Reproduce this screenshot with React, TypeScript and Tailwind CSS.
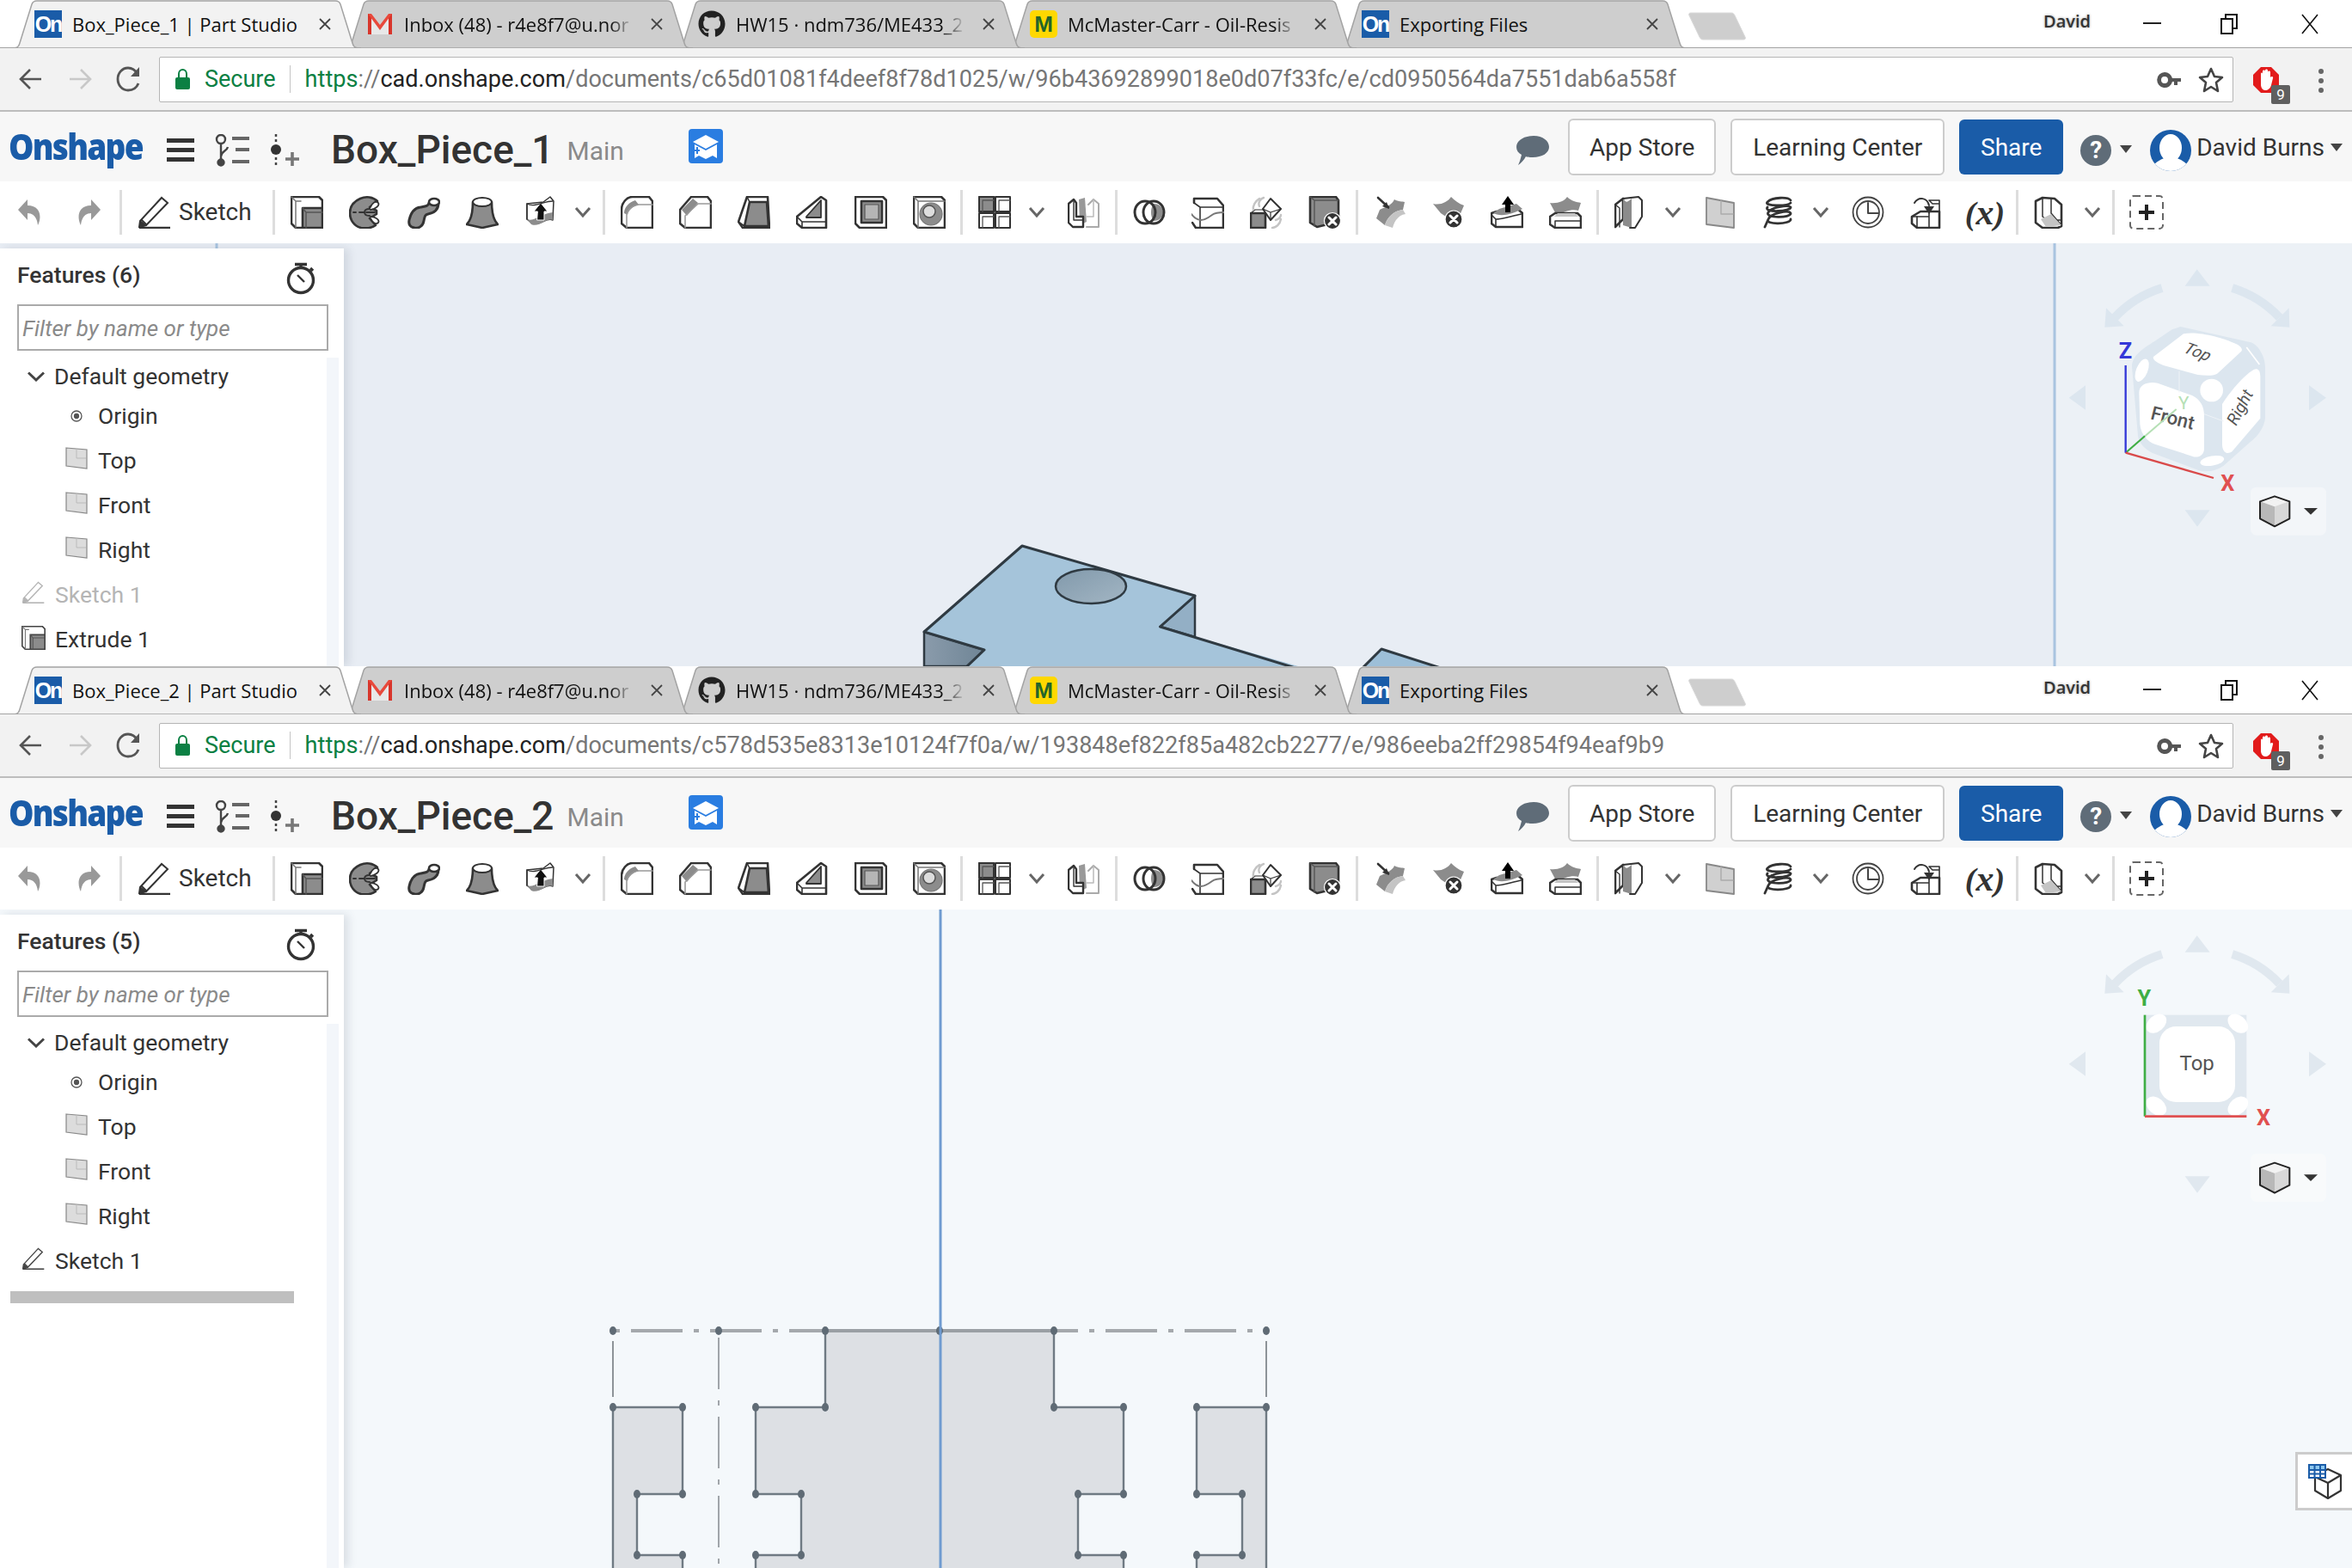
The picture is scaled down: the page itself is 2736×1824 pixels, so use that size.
import React from "react";
import { FaGithub } from "react-icons/fa";

const D = "#333";
const G = "#8c8c8c";
const L = "#c4c4c4";

function I({ children }: { children: React.ReactNode }) {
  return (
    <svg width="38" height="38" viewBox="0 0 38 38" fill="none" stroke={D} strokeWidth="2.6" strokeLinejoin="round" strokeLinecap="round">
      {children}
    </svg>
  );
}

const icons: Record<string, React.ReactNode> = {
  extrude: (<>
    <path d="M1 1H33L37 5V37H6L1 32Z" fill="#fff" />
    <path d="M1 1L6 6V37M6 6H12" stroke="#777" strokeWidth="1.5" />
    <path d="M14 14H37V37H14Z" fill={G} />
    <path d="M14 14L18 19H37M18 19V37" stroke="#555" strokeWidth="1.5" />
  </>),
  revolve: (<>
    <path d="M33 6C28 1 20 0 13 3C4 7 1 14 1 20C1 28 6 35 14 37C21 38 27 37 31 34L24 26L32 21V17L24 13Z" fill={G} />
    <path d="M25 13C27 8 31 5 34 8C36 11 31 15 25 16M25 24C31 24 36 28 34 31C31 34 27 30 25 26" fill="#fff" strokeWidth="1.8" />
    <path d="M5 19H8M12 19H18M18 19C18 16 20 15 24 15M18 19C18 22 20 23 24 23M20 19H30" strokeWidth="1.8" />
  </>),
  sweep: (<>
    <path d="M36 8C36 17 30 20 24 21C20 22 20 24 19 29C18 35 13 38 8 37C3 36 1 33 2 28C4 19 8 14 15 13C21 12 24 12 25 8Z" fill={G} strokeWidth="3" />
    <ellipse cx="31" cy="7" rx="6" ry="4" fill="#fff" strokeWidth="2.6" />
  </>),
  loft: (<>
    <path d="M8 7C8 18 6 28 1 33L19 37L37 33C32 28 30 18 30 7Z" fill={G} />
    <ellipse cx="19" cy="7" rx="11" ry="5" fill="#fff" strokeWidth="2" />
  </>),
  thicken: (<>
    <path d="M3 9L22 7L30 1L34 6L33 28C25 24 18 36 8 31L3 27Z" fill="#fff" strokeWidth="1.5" />
    <path d="M3 27C12 30 15 22 33 19V28C25 25 18 37 8 33Z" fill={G} stroke="none" />
    <path d="M15 28H23V18H27L19 8L11 18H15Z" fill="#111" stroke="#fff" strokeWidth="1" />
    <path d="M3 9V27M3 9C12 14 22 6 33 6" strokeWidth="1.4" />
  </>),
  fillet: (<>
    <path d="M14 1H33L37 6V37H7L1 32V16C1 8 7 1 14 1Z" fill="#fff" />
    <path d="M4 20C4 13 10 7 17 5L21 10C15 12 9 16 8 22Z" fill={G} stroke="none" />
    <path d="M7 37V22C8 15 14 11 21 10H37" stroke="#999" strokeWidth="1.6" />
  </>),
  chamfer: (<>
    <path d="M14 1H33L37 6V37H7L1 32V16Z" fill="#fff" />
    <path d="M3 16L16 3L22 8L9 23Z" fill={G} stroke="none" />
    <path d="M7 37V23L22 9H37" stroke="#999" strokeWidth="1.6" />
  </>),
  draft: (<>
    <path d="M11 1H35L37 37H6L1 30Z" fill="#fff" />
    <path d="M14 7H34L36 35H8Z" fill={G} />
    <path d="M11 1L14 7M1 30L8 35" strokeWidth="1.6" />
  </>),
  rib: (<>
    <path d="M29 1L35 5V37H7L1 32V24Z" fill="#fff" />
    <path d="M12 24L29 5V25H12Z" fill={G} stroke="#333" strokeWidth="1.8" />
    <path d="M1 24L7 30H35M7 30V37" strokeWidth="1.6" />
  </>),
  shell: (<>
    <path d="M1 1H33L37 5V37H6L1 32Z" fill="#fff" />
    <path d="M8 6H32V31H8Z" fill={G} />
    <path d="M12 10H28V27H12Z" fill="#b5b5b5" stroke="#555" strokeWidth="1.2" />
  </>),
  hole: (<>
    <path d="M1 1H33L37 5V37H6L1 32Z" fill="#fff" />
    <path d="M1 1L6 6H37M6 6V37" strokeWidth="1.5" stroke="#777" />
    <circle cx="21" cy="21" r="13" fill={G} stroke="#777" strokeWidth="1.2" />
    <circle cx="19" cy="18" r="7" fill="#ddd" stroke="#555" strokeWidth="1.5" />
  </>),
  pattern: (<>
    <path d="M1 1H18V18H1ZM20 1H37V18H20ZM1 20H18V37H1ZM20 20H37V37H20Z" fill="#fff" strokeWidth="2" />
    <path d="M1 1H18V18H1Z" fill={G} strokeWidth="2" />
    <path d="M5 5H18M5 5V18M5 24H18M5 24V37M24 5H37M24 5V18M24 24H37M24 24V37" strokeWidth="1.3" stroke="#555" />
  </>),
  mirror: (<>
    <path d="M13 4L20 2L22 30L14 34Z" fill="#999" stroke="none" />
    <path d="M24 10L30 4L36 9V36H22" fill="#fff" stroke="#aaa" strokeWidth="2" />
    <path d="M30 4V24H22" stroke="#bbb" strokeWidth="1.5" />
    <path d="M1 9L7 4L10 8V24H18V36H6L1 31Z" fill="#fff" strokeWidth="2.4" />
    <path d="M7 4V28H18" strokeWidth="1.4" />
  </>),
  boolean: (<>
    <path d="M24 9C20 14 20 24 24 29C31 29 35 24 35 19C35 14 31 9 24 9Z" fill={G} stroke="none" />
    <ellipse cx="14" cy="19" rx="12" ry="13" strokeWidth="3" />
    <ellipse cx="24" cy="19" rx="12" ry="13" strokeWidth="3" />
  </>),
  split: (<>
    <path d="M3 8V3H30L37 11V37H5L1 31" fill="#fff" />
    <path d="M3 8L10 13H37M10 13V37" strokeWidth="1.6" />
    <path d="M0 21C8 32 16 28 24 22C28 19 33 19 38 19" stroke="#777" strokeWidth="2" />
  </>),
  transform: (<>
    <path d="M1 20H18V37H1Z" fill={G} />
    <path d="M1 20L6 16H20L18 20M18 20V37" strokeWidth="1.2" />
    <path d="M24 3L36 15L24 28L15 15Z" fill="#fff" strokeWidth="2" />
    <path d="M15 15L24 19L36 15M24 19V28" strokeWidth="1.2" />
    <path d="M11 12C9 8 12 3 16 2M4 16C3 12 6 6 11 3" stroke={L} strokeWidth="2.4" />
    <path d="M30 28C34 27 36 24 36 22M26 37C30 37 35 33 36 27" stroke={L} strokeWidth="2.4" />
  </>),
  del: (<>
    <path d="M2 1H32L35 5V30L10 36L2 31Z" fill={G} />
    <path d="M2 1L7 5H35M7 5V35" stroke="#555" strokeWidth="1.4" />
    <circle cx="28" cy="29" r="9.5" fill={D} stroke="#fff" strokeWidth="1.2" />
    <path d="M24 25L32 33M32 25L24 33" stroke="#fff" strokeWidth="3" />
  </>),
  moveFace: (<>
    <path d="M7 16C13 13 22 10 24 4C29 7 33 6 36 7L34 16C24 17 16 24 13 34L3 26Z" fill={G} stroke="none" />
    <path d="M13 34C16 24 24 17 34 16L37 21C29 22 24 29 22 37Z" fill={L} stroke="none" />
    <path d="M5 2L17 13" strokeWidth="2.6" />
    <path d="M18 15L15 7L10 12Z" fill={D} stroke="none" />
  </>),
  delSurf: (<>
    <path d="M1 9C10 11 18 7 22 1C26 5 31 9 37 11L28 32L10 20Z" fill={G} stroke="none" />
    <circle cx="25" cy="27" r="10" fill={D} stroke="#fff" strokeWidth="1.2" />
    <path d="M21 23L29 31M29 23L21 31" stroke="#fff" strokeWidth="3" />
  </>),
  offset: (<>
    <path d="M1 20L7 18C14 18 22 16 28 12L37 20V36H6L1 32Z" fill="#fff" />
    <path d="M3 20C9 23 20 24 37 15L30 9L10 15Z" fill={G} stroke="none" />
    <path d="M6 27V36M6 27L1 22M6 27C16 27 24 23 36 21" strokeWidth="1.6" />
    <path d="M17 19H23V10H27L20 0L13 10H17Z" fill="#000" stroke="none" />
  </>),
  replace: (<>
    <path d="M1 8C10 9 18 6 21 1C26 6 32 7 37 8L34 17C26 15 18 18 9 23Z" fill={G} stroke="none" />
    <path d="M1 24L7 20H33L37 24V37H7L1 33Z" fill="#fff" />
    <path d="M6 24H34L30 20H10Z" fill={L} stroke="none" />
    <path d="M7 29V37M7 29H37" strokeWidth="1.5" />
  </>),
  sheet: (<>
    <path d="M1 10L10 3V27L1 36Z" fill="#fff" />
    <path d="M10 3C14 8 14 8 20 3V37L10 34Z" fill={G} stroke="none" />
    <path d="M10 3L28 1L32 5V24L24 37H18" fill="none" strokeWidth="2" />
    <path d="M1 10L6 14V36" strokeWidth="1.4" />
  </>),
  plane: (<>
    <path d="M3 2L35 8V37L3 33Z" fill="#d0d0d0" stroke="#888" strokeWidth="1.8" />
    <path d="M20 5V21H34" stroke="#aaa" strokeWidth="1.4" />
  </>),
  helix: (<>
    <path d="M33 5C30 1 12 1 6 7C1 12 30 12 33 8M6 13C1 20 34 18 33 13C30 10 10 13 7 19C2 26 34 26 33 20C30 16 10 20 7 27C2 34 34 33 33 27M7 27L3 36" strokeWidth="2.8" fill="none" />
  </>),
  clock: (<>
    <circle cx="19" cy="19" r="17.5" strokeWidth="1.8" stroke="#444" />
    <circle cx="19" cy="19" r="13" strokeWidth="1.8" stroke="#444" />
    <path d="M19 8V20H31" strokeWidth="2" stroke="#444" />
  </>),
  insert: (<>
    <path d="M2 24L12 18H34V37H8L2 32Z" fill="#fff" />
    <path d="M22 5L34 5V27M22 5L26 9H34M8 24H22M22 18V37M8 24V37" strokeWidth="1.6" />
    <path d="M2 24L8 24" strokeWidth="1.6" />
    <path d="M5 8C10 0 20 2 22 11" strokeWidth="2" />
    <path d="M16 12H28L22 21Z" fill={D} stroke="none" />
  </>),
  smetal: (<>
    <path d="M2 6L10 2L24 3L32 10V35L28 37H10L2 31Z" fill="#fff" />
    <path d="M10 2V24L16 28H32M20 3V20L32 34" strokeWidth="1.5" />
    <path d="M8 27L20 21L32 34L14 36Z" fill={L} stroke="none" />
  </>),
};

function Ic({ n }: { n: string }) {
  return (
    <div className="w-[68px] h-[40px] flex items-center justify-center shrink-0">
      <I>{icons[n]}</I>
    </div>
  );
}
function Chev() {
  return (
    <div className="w-[36px] pr-[6px] flex items-center justify-center shrink-0">
      <svg width="20" height="14" viewBox="0 0 20 14" fill="none" stroke="#666" strokeWidth="3">
        <path d="M2 2L10 11L18 2" />
      </svg>
    </div>
  );
}
function Sep() {
  return <div className="w-[3px] h-[52px] bg-[#dddddd] ml-[2px] mr-[3px] shrink-0" />;
}
function Pencil({ c = "#333", s = 38 }: { c?: string; s?: number }) {
  return (
    <svg width={s} height={s} viewBox="0 0 38 38" fill="none" stroke={c} strokeWidth="2">
      <path d="M2 29L27 2L34 8L9 34L1 36ZM4 28L10 34" fill="#fff" />
      <path d="M1 37H37" strokeWidth="2.6" />
      <path d="M3 30L2 36L8 34Z" fill={c} />
    </svg>
  );
}
function Undo({ flip }: { flip?: boolean }) {
  return (
    <div className="w-[68px] flex justify-center shrink-0">
      <svg width="30" height="32" viewBox="0 0 30 32" fill="#999" className={flip ? "-scale-x-100" : ""}>
        <path d="M12 1L1 13L12 25V17C19 17 23 22 24 31C28 24 29 8 12 8Z" />
      </svg>
    </div>
  );
}

function Toolbar() {
  return (
    <div className="h-[72px] bg-white flex items-center pl-[1px] shrink-0">
      <Undo />
      <Undo flip />
      <Sep />
      <div className="w-[170px] pl-[16px] flex items-center gap-[9px] shrink-0">
        <Pencil />
        <span className="text-[28px] text-[#333] font-['Roboto',sans-serif]">Sketch</span>
      </div>
      <Sep />
      <Ic n="extrude" /><Ic n="revolve" /><Ic n="sweep" /><Ic n="loft" /><Ic n="thicken" /><Chev />
      <Sep />
      <Ic n="fillet" /><Ic n="chamfer" /><Ic n="draft" /><Ic n="rib" /><Ic n="shell" /><Ic n="hole" />
      <Sep />
      <Ic n="pattern" /><Chev /><Ic n="mirror" />
      <Sep />
      <Ic n="boolean" /><Ic n="split" /><Ic n="transform" /><Ic n="del" />
      <Sep />
      <Ic n="moveFace" /><Ic n="delSurf" /><Ic n="offset" /><Ic n="replace" />
      <Sep />
      <Ic n="sheet" /><Chev /><Ic n="plane" /><Ic n="helix" /><Chev /><Ic n="clock" /><Ic n="insert" />
      <div className="w-[68px] flex justify-center shrink-0">
        <span className="text-[38px] leading-none font-bold italic text-[#333] font-['Liberation_Serif',serif]">(<span className="text-[42px]">x</span>)</span>
      </div>
      <Sep />
      <Ic n="smetal" /><Chev />
      <Sep />
      <div className="w-[68px] flex justify-center shrink-0">
        <svg width="40" height="40" viewBox="0 0 40 40" fill="none" stroke="#666" strokeWidth="2" strokeDasharray="8 5">
          <rect x="1" y="1" width="38" height="38" rx="4" />
          <path d="M20 11V29M11 20H29" stroke="#222" strokeWidth="4" strokeDasharray="none" />
        </svg>
      </div>
    </div>
  );
}

function OnFav() {
  return (
    <div className="w-[32px] h-[32px] bg-[#1a5ca8] text-white font-bold text-[25px] leading-[32px] tracking-[-2px] text-center overflow-hidden font-['Liberation_Sans',sans-serif] shrink-0">
      On
    </div>
  );
}
function GmailFav() {
  return (
    <svg width="30" height="26" viewBox="0 0 30 26" className="shrink-0 mx-[1px]">
      <path d="M5 6V25H25V6L15 20Z" fill="#e8e8e8" />
      <path d="M1 1H5V25H1ZM25 1H29V25H25Z" fill="#d8342a" />
      <path d="M1 1H5L15 14L25 1H29L15 20Z" fill="#e8493c" />
    </svg>
  );
}
function McFav() {
  return (
    <div className="w-[32px] h-[32px] rounded-[5px] bg-[#ffd800] text-[#24652a] font-bold text-[26px] leading-[32px] text-center font-['Liberation_Sans',sans-serif] shrink-0">
      M
    </div>
  );
}

function Tab({ active, fav, title, z, fade }: { active?: boolean; fav: React.ReactNode; title: string; z: string; fade?: boolean }) {
  return (
    <div className={`relative w-[407px] h-[56px] shrink-0 -mr-[21px] ${z}`}>
      <svg className="absolute inset-0" width="407" height="56" viewBox="0 0 407 56">
        <path d="M0 56C8 56 9 54 10 50L24 5C25 2 27 1 30 1H377C380 1 382 2 383 5L397 50C398 54 399 56 407 56Z" fill={active ? "#f2f2f2" : "#cecece"} stroke="#a3a3a3" strokeWidth="1.5" />
      </svg>
      <div className="relative h-full pl-[27px] flex items-center font-['Open_Sans',sans-serif] text-[#111]">
        <div className="w-[32px] flex justify-center items-center shrink-0">{fav}</div>
        <div className={`ml-[12px] w-[267px] text-[22px] whitespace-nowrap overflow-hidden ${fade ? "[mask-image:linear-gradient(to_right,black_90%,transparent)]" : ""}`}>
          {title}
        </div>
        <svg className="ml-[20px]" width="14" height="14" viewBox="0 0 14 14" stroke="#444" strokeWidth="1.8">
          <path d="M1 1L13 13M13 1L1 13" />
        </svg>
      </div>
    </div>
  );
}

function TabStrip({ first }: { first: string }) {
  return (
    <div className="h-[56px] bg-white relative flex pl-[13px] shrink-0 after:content-[''] after:absolute after:left-0 after:right-0 after:bottom-0 after:h-[1.5px] after:bg-[#a3a3a3]">
      <Tab active z="z-50" fav={<OnFav />} title={first} />
      <Tab z="z-40" fav={<GmailFav />} title="Inbox (48) - r4e8f7@u.nor" fade />
      <Tab z="z-30" fav={<FaGithub size={32} color="#222" />} title="HW15 · ndm736/ME433_2" fade />
      <Tab z="z-20" fav={<McFav />} title="McMaster-Carr - Oil-Resis" fade />
      <Tab z="z-10" fav={<OnFav />} title="Exporting Files" />
      <div className="ml-[21px] mt-[14px] relative z-10">
        <svg width="68" height="34" viewBox="0 0 68 34">
          <path d="M3 1H50C52 1 53 2 54 4L66 29C67 31 66 32 64 32H17C15 32 14 31 13 29L1 4C0 2 1 1 3 1Z" fill="#cecece" stroke="#d8d8d8" />
        </svg>
      </div>
      <div className="absolute left-[2377px] top-[10px] text-[20px] font-semibold text-[#333] font-['Open_Sans',sans-serif] [text-shadow:0_0_3px_#999]">David</div>
      <div className="absolute left-[2493px] top-[26px] w-[21px] h-[2px] bg-[#222]" />
      <svg className="absolute left-[2583px] top-[16px]" width="20" height="24" viewBox="0 0 20 24" fill="none" stroke="#111" strokeWidth="2">
        <path d="M6 5V1H19V17H14M1 6H14V23H1Z" />
      </svg>
      <svg className="absolute left-[2677px] top-[16px]" width="20" height="24" viewBox="0 0 20 24" fill="none" stroke="#111" strokeWidth="1.6">
        <path d="M1 1L19 23M19 1L1 23" />
      </svg>
    </div>
  );
}

function AddressBar({ path }: { path: string }) {
  return (
    <div className="h-[74px] bg-[#f2f2f2] border-b-[2px] border-[#bdbdbd] flex items-center shrink-0 relative">
      <svg className="ml-[22px]" width="28" height="28" viewBox="0 0 28 28" fill="none" stroke="#555" strokeWidth="2.6">
        <path d="M26 14H3M13 3L2 14L13 25" />
      </svg>
      <svg className="ml-[29px]" width="28" height="28" viewBox="0 0 28 28" fill="none" stroke="#c8c8c8" strokeWidth="2.6">
        <path d="M2 14H25M15 3L26 14L15 25" />
      </svg>
      <svg className="ml-[28px]" width="30" height="30" viewBox="0 0 30 30" fill="none" stroke="#555" strokeWidth="2.8">
        <path d="M25 9C22 4 18 2 14 2C7 2 2 8 2 15C2 22 7 28 14 28C20 28 24 25 26 20" />
        <path d="M27 1V12H17Z" fill="#555" stroke="none" />
      </svg>
      <div className="ml-[20px] w-[2413px] h-[53px] bg-white border border-[#b5b5b5] rounded-[2px] flex items-center relative">
        <svg className="ml-[18px]" width="17" height="24" viewBox="0 0 17 24">
          <path d="M4 10V6C4 3 6 1 8.5 1C11 1 13 3 13 6V10" fill="none" stroke="#0b8043" strokeWidth="2" />
          <rect x="0" y="10" width="17" height="14" rx="2" fill="#0b8043" />
        </svg>
        <span className="ml-[17px] text-[#0b8043] text-[27px] font-['Roboto',sans-serif]">Secure</span>
        <div className="ml-[16px] w-[1px] h-[32px] bg-[#c4c4c4]" />
        <span className="ml-[17px] text-[27.1px] whitespace-nowrap font-['Roboto',sans-serif] text-[#767676]">
          <span className="text-[#0b8043]">https</span>://<span className="text-[#222]">cad.onshape.com</span>{path}
        </span>
        <svg className="absolute left-[2322px] top-[16px]" width="30" height="20" viewBox="0 0 30 20" fill="#555">
          <path d="M10 1A9 9 0 1 0 19 12H21V16H25V12H29V8H19A9 9 0 0 0 10 1ZM10 6A4 4 0 1 1 10 14A4 4 0 0 1 10 6Z" fill="#555" fillRule="evenodd" />
        </svg>
        <svg className="absolute left-[2371px] top-[11px]" width="30" height="30" viewBox="0 0 30 30" fill="none" stroke="#444" strokeWidth="2.6">
          <path d="M15 2L19 11L28 12L21 18L23 28L15 23L7 28L9 18L2 12L11 11Z" strokeLinejoin="round" />
        </svg>
      </div>
      <div className="absolute left-[2620px] top-[21px] w-[32px] h-[32px]">
        <svg width="32" height="32" viewBox="0 0 32 32">
          <path d="M10 1H22L31 10V22L22 31H10L1 22V10Z" fill="#e21b1b" />
          <path d="M10 18V9C10 7 12 7 12 9V6C12 4 15 4 15 6V5C15 3 18 3 18 5V7C18 5 21 5 21 7V13C22 11 25 12 24 14L22 22C21 26 18 28 15 28C12 28 10 25 10 21Z" fill="#fff" />
        </svg>
      </div>
      <div className="absolute left-[2642px] top-[43px] w-[22px] h-[22px] bg-[#5f5f5f] rounded-[2px] text-white text-[17px] leading-[22px] text-center font-['Roboto',sans-serif]">9</div>
      <div className="absolute left-[2697px] top-[24px] flex flex-col gap-[5px]">
        <div className="w-[6px] h-[6px] rounded-full bg-[#666]" />
        <div className="w-[6px] h-[6px] rounded-full bg-[#666]" />
        <div className="w-[6px] h-[6px] rounded-full bg-[#666]" />
      </div>
    </div>
  );
}

function Caret() {
  return <div className="w-0 h-0 border-l-[7.5px] border-r-[7.5px] border-t-[9px] border-l-transparent border-r-transparent border-t-[#444]" />;
}

function Header({ title, avatarId }: { title: string; avatarId: string }) {
  return (
    <div className="h-[81px] bg-[#f7f7f7] flex items-center pl-[10px] pr-[11px] shrink-0 font-['Roboto',sans-serif]">
      <span className="w-[158px] text-[#1a5ca8] text-[43px] font-extrabold tracking-[-2px] leading-none whitespace-nowrap font-['Open_Sans',sans-serif] -mt-[3px] scale-x-[0.86] origin-left">Onshape</span>
      <div className="ml-[26px] w-[32px] flex flex-col gap-[6px] mt-[7px]">
        <div className="h-[5px] bg-[#333]" /><div className="h-[5px] bg-[#333]" /><div className="h-[5px] bg-[#333]" />
      </div>
      <svg className="ml-[24px] mt-[8px]" width="40" height="38" viewBox="0 0 40 38" fill="none" stroke="#444" strokeWidth="2.4">
        <circle cx="7" cy="6" r="5" />
        <path d="M7 11V30M7 26C7 20 14 20 15 15" />
        <circle cx="7" cy="33" r="3.5" fill="#444" />
        <path d="M20 5H40M24 18H40M20 32H40" stroke="#666" strokeWidth="4" />
      </svg>
      <svg className="ml-[25px] mt-[8px]" width="34" height="40" viewBox="0 0 34 40" fill="none" stroke="#444" strokeWidth="2.5">
        <path d="M6 1V10M6 28V38" strokeDasharray="3 3" />
        <circle cx="6" cy="19" r="6" fill="#333" stroke="none" />
        <path d="M25 22V38M17 30H33" stroke="#777" strokeWidth="3.6" />
      </svg>
      <span className="ml-[36px] text-[46px] font-medium text-[#333] leading-none whitespace-nowrap mt-[6px]">{title}</span>
      <span className="ml-[15px] text-[30px] text-[#8a8a8a] leading-none mt-[10px]">Main</span>
      <div className="ml-[75px] w-[40px] h-[40px] rounded-[4px] bg-[#2a7de1] flex items-center justify-center -mt-[1px]">
        <svg width="32" height="32" viewBox="0 0 32 32" fill="#fff">
          <path d="M16 3L31 11L16 19L1 11Z" />
          <path d="M3 14V30L8 27L16 31L24 27L29 30V14L16 21Z" />
          <path d="M6 17V25M9 21H3" stroke="#2a7de1" strokeWidth="2" />
        </svg>
      </div>
      <div className="ml-auto flex items-center">
        <svg className="mt-[8px]" width="40" height="36" viewBox="0 0 40 36">
          <path d="M21 1C32 1 39 7 39 14C39 21 31 26 20 26C17 26 14 26 12 25C10 29 6 33 3 35C5 31 6 27 7 23C3 21 1 18 1 14C1 7 9 1 21 1Z" fill="#5f6c78" />
        </svg>
        <button className="ml-[21px] w-[172px] h-[66px] pt-[2px] bg-white border-[2px] border-[#cccccc] rounded-[6px] text-[28px] text-[#333]">App Store</button>
        <button className="ml-[17px] w-[249px] h-[66px] pt-[2px] bg-white border-[2px] border-[#cccccc] rounded-[6px] text-[28px] text-[#333]">Learning Center</button>
        <button className="ml-[17px] w-[121px] h-[64px] pt-[2px] bg-[#1a5ca8] rounded-[6px] text-[28px] text-white">Share</button>
        <div className="ml-[20px] mt-[8px] w-[36px] h-[36px] rounded-full bg-[#5f6c78] text-white text-[28px] font-bold leading-[36px] text-center">?</div>
        <div className="ml-[10px] mr-[21px] mt-[6px]"><Caret /></div>
        <svg className="mt-[8px]" width="48" height="48" viewBox="0 0 48 48">
          <defs><clipPath id={avatarId}><circle cx="24" cy="24" r="24" /></clipPath></defs>
          <circle cx="24" cy="24" r="24" fill="#1a5ca8" />
          <g clipPath={`url(#${avatarId})`}>
            <ellipse cx="24" cy="21" rx="13" ry="16" fill="#fff" />
            <path d="M2 48C4 36 14 35 18 32H30C34 35 44 36 46 48Z" fill="#fff" />
          </g>
        </svg>
        <span className="ml-[6px] mt-[2px] text-[28px] text-[#333] whitespace-nowrap">David Burns</span>
        <div className="ml-[7px] mt-[2px]"><Caret /></div>
      </div>
    </div>
  );
}

function PlaneIcon() {
  return (
    <svg width="26" height="26" viewBox="0 0 26 26" fill="none">
      <path d="M1 1L25 3V25L1 22Z" fill="#dcdcdc" stroke="#888" strokeWidth="1.2" />
      <path d="M13 2V13H24" stroke="#bbb" strokeWidth="1" />
    </svg>
  );
}

function Row({ children, h = "h-[52px]" }: { children: React.ReactNode; h?: string }) {
  return <div className={`${h} flex items-center text-[26.5px] text-[#333] whitespace-nowrap`}>{children}</div>;
}

function Panel({ count, dim, extrude, bar }: { count: number; dim?: boolean; extrude?: boolean; bar?: boolean }) {
  return (
    <div className="relative z-10 w-[400px] mt-[6px] bg-white shadow-[5px_0_10px_rgba(60,70,90,0.14)] font-['Roboto',sans-serif] shrink-0">
      <div className="absolute left-[380px] top-[127px] bottom-0 w-[14px] bg-[#f3f6fa]" />
      <div className="relative">
        <div className="h-[62px] flex items-center pl-[20px]">
          <span className="text-[26.5px] font-medium text-[#333]">Features ({count})</span>
          <svg className="ml-auto mr-[33px] mt-[8px]" width="34" height="38" viewBox="0 0 34 38" fill="none" stroke="#333" strokeWidth="3.4">
            <circle cx="17" cy="21" r="14.5" />
            <path d="M10 2.5H24M17 3V7M28 7L31 10" />
            <path d="M13 15L21 23" strokeWidth="2.4" />
          </svg>
        </div>
        <div className="mt-[3px] ml-[20px] w-[362px] h-[54px] border-[2px] border-[#aaaaaa] flex items-center pl-[4px] pt-[2px] text-[26px] italic text-[#8a8a8a] bg-white">
          Filter by name or type
        </div>
        <div className="mt-[8px]">
          <Row h="h-[44px]">
            <svg className="ml-[32px]" width="20" height="12" viewBox="0 0 20 12" fill="none" stroke="#444" strokeWidth="3">
              <path d="M1 1.5L10 10L19 1.5" />
            </svg>
            <span className="ml-[11px]">Default geometry</span>
          </Row>
          <Row h="h-[47px]">
            <svg className="ml-[82px]" width="14" height="14" viewBox="0 0 14 14" fill="none" stroke="#555" strokeWidth="1.3">
              <circle cx="7" cy="7" r="6" />
              <circle cx="7" cy="7" r="2.5" fill="#555" />
            </svg>
            <span className="ml-[18px]">Origin</span>
          </Row>
          <div className="h-[3px]" />
          {["Top", "Front", "Right"].map((t) => (
            <Row key={t}>
              <div className="ml-[76px] h-[26px] -mt-[6px]"><PlaneIcon /></div>
              <span className="ml-[12px]">{t}</span>
            </Row>
          ))}
          <Row>
            <div className={`ml-[26px] h-[26px] -mt-[6px] ${dim ? "opacity-40" : ""}`}><Pencil s={26} c="#444" /></div>
            <span className={`ml-[12px] ${dim ? "text-[#b5b5b5]" : ""}`}>Sketch 1</span>
          </Row>
          {extrude && (
            <Row>
              <div className="ml-[25px] w-[28px] h-[28px] -mt-[4px]">
                <svg width="28" height="28" viewBox="0 0 38 38" fill="none" stroke="#444" strokeWidth="2.4">
                  {icons.extrude}
                </svg>
              </div>
              <span className="ml-[11px]">Extrude 1</span>
            </Row>
          )}
          {bar && <div className="mt-[9px] ml-[12px] w-[330px] h-[14px] bg-[#bfbfbf]" />}
        </div>
      </div>
    </div>
  );
}

function Arrows({ dy, fill }: { dy: number; fill: string }) {
  return (
    <g fill={fill} transform={`translate(0 ${dy})`}>
      <path d="M485 128L527 70L572 128Z" />
      <path d="M138 475L80 518L138 560Z" />
      <path d="M918 475L978 518L918 562Z" />
      <path d="M485 910H572L528 968Z" />
      <path d="M405 135C340 155 285 190 240 238" fill="none" stroke={fill} strokeWidth="30" />
      <path d="M205 272L210 205L272 268Z" />
      <path d="M650 135C715 155 770 190 815 238" fill="none" stroke={fill} strokeWidth="30" />
      <path d="M850 272L848 205L785 268Z" />
    </g>
  );
}

function ViewBox({ y, bg }: { y: number; bg: string }) {
  return (
    <g transform={`translate(0 ${y})`}>
      <rect x="714" y="830" width="264" height="168" rx="20" fill={bg} />
      <path d="M798 862L850 880V940L798 967L747 940V880Z" fill="#d8d8d8" />
      <path d="M747 880L798 898V967L747 940Z" fill="#b8b8b8" />
      <path d="M798 864L848 880L798 898L749 880Z" fill="#f2f2f2" />
      <path d="M798 862L850 880V940L798 967L747 940V880Z" fill="none" stroke="#222" strokeWidth="6" strokeLinejoin="round" />
      <path d="M900 903H948L924 926Z" fill="#333" />
    </g>
  );
}

function NavIso() {
  const c = "#dce6ef";
  return (
    <svg className="absolute left-[2380px] top-[7px]" width="356" height="340" viewBox="0 0 1068 1020">
      <Arrows dy={0} fill={c} />
      <path d="M470 270L715 325C745 335 765 380 765 410V590C760 630 730 660 710 675L620 755C590 775 560 780 530 770L370 710C340 695 320 670 320 640L300 410C300 370 340 345 380 320L440 280Z" fill={c} />
      <path d="M375 375L480 295C530 285 620 310 650 325C680 335 690 350 680 358L600 432C590 442 560 442 530 438L410 405C390 398 370 385 375 375Z" fill="#fff" />
      <path d="M325 500C325 470 360 460 390 467L510 510C540 525 552 550 552 580V695C552 720 530 730 510 722L380 680C350 670 330 640 328 610Z" fill="#fff" />
      <path d="M615 540C640 500 690 440 725 420C745 412 748 430 748 450V590L650 705C630 720 615 705 615 680Z" fill="#fff" />
      <circle cx="578" cy="492" r="40" fill="#fff" />
      <ellipse cx="335" cy="422" rx="20" ry="42" transform="rotate(22 335 422)" fill="#fff" />
      <ellipse cx="580" cy="738" rx="42" ry="17" transform="rotate(-10 580 738)" fill="#fff" />
      <path d="M700 342L745 402" stroke="#fff" strokeWidth="5" />
      <path d="M465 425V500M552 575L620 600" stroke="#eef3f7" strokeWidth="3" />
      <text x="0" y="0" transform="translate(474 358) rotate(20) skewX(-18)" fontSize="56" fill="#555" fontFamily="Roboto, sans-serif">Top</text>
      <text x="0" y="0" transform="translate(362 592) rotate(14)" fontSize="66" fill="#555" fontFamily="Roboto, sans-serif" fontWeight="500">Front</text>
      <text x="0" y="0" transform="translate(664 618) rotate(-62)" fontSize="58" fill="#555" fontStyle="italic" fontFamily="Roboto, sans-serif">Right</text>
      <path d="M278 710L455 558" stroke="#b5e0b5" strokeWidth="6" />
      <path d="M278 710L345 652" stroke="#3fae45" strokeWidth="6" />
      <text x="462" y="558" fontSize="62" fill="#b5e0b5" fontFamily="Roboto, sans-serif">Y</text>
      <path d="M278 405V710" stroke="#3438d8" strokeWidth="7" />
      <path d="M278 710L585 798" stroke="#d94a4a" strokeWidth="7" />
      <text x="254" y="382" fontSize="76" fontWeight="700" fill="#3438d8" fontFamily="Roboto, sans-serif">Z</text>
      <text x="610" y="842" fontSize="76" fontWeight="700" fill="#e05050" fontFamily="Roboto, sans-serif">X</text>
      <ViewBox y={0} bg="#f3f6f9" />
    </svg>
  );
}

function NavTop() {
  const c = "#e0e8ef";
  return (
    <svg className="absolute left-[2380px] top-[2px]" width="356" height="340" viewBox="0 0 1068 1020">
      <Arrows dy={15} fill={c} />
      <rect x="345" y="362" width="355" height="354" fill={c} />
      <rect x="396" y="402" width="264" height="264" rx="58" fill="#fff" />
      <ellipse cx="385" cy="392" rx="40" ry="28" transform="rotate(-40 385 392)" fill="#fff" />
      <ellipse cx="670" cy="392" rx="40" ry="28" transform="rotate(40 670 392)" fill="#fff" />
      <ellipse cx="385" cy="680" rx="40" ry="28" transform="rotate(40 385 680)" fill="#fff" />
      <ellipse cx="670" cy="680" rx="40" ry="28" transform="rotate(-40 670 680)" fill="#fff" />
      <text x="527" y="556" fontSize="72" textAnchor="middle" fill="#555" fontFamily="Roboto, sans-serif">Top</text>
      <path d="M345 362V716" stroke="#3fae45" strokeWidth="8" />
      <path d="M345 716H700" stroke="#e05050" strokeWidth="8" />
      <text x="343" y="330" textAnchor="middle" fontSize="76" fontWeight="700" fill="#3fae45" fontFamily="Roboto, sans-serif">Y</text>
      <text x="759" y="746" textAnchor="middle" fontSize="76" fontWeight="700" fill="#e05050" fontFamily="Roboto, sans-serif">X</text>
      <ViewBox y={16} bg="#f8fafb" />
    </svg>
  );
}

function Model() {
  return (
    <svg className="absolute inset-0" width="2736" height="492" viewBox="0 283 2736 492">
      <defs>
        <linearGradient id="holeg" x1="0" y1="0" x2="1" y2="1">
          <stop offset="0" stopColor="#8199ab" />
          <stop offset="1" stopColor="#a3b6c4" />
        </linearGradient>
        <linearGradient id="sideg" x1="0" y1="0" x2="1" y2="0">
          <stop offset="0" stopColor="#8a9bab" />
          <stop offset="1" stopColor="#6f8596" />
        </linearGradient>
      </defs>
      <path d="M2390 283V775" stroke="#a9c4e0" strokeWidth="3" />
      <path d="M252 283V289" stroke="#a9c4e0" strokeWidth="3" />
      <path d="M1075 735V775H1125L1145 756Z" fill="url(#sideg)" stroke="#2f3a42" strokeWidth="2.5" strokeLinejoin="round" />
      <path d="M1390 693V741L1349.5 729Z" fill="#93afc5" stroke="#2f3a42" strokeWidth="2.5" strokeLinejoin="round" />
      <path d="M1189 635L1390 693L1349.5 729L1510 775H1125L1145 756L1075 735Z" fill="#a5c4da" />
      <path d="M1125 775L1145 756L1075 735L1189 635L1390 693L1349.5 729L1510 778" fill="none" stroke="#2f3a42" strokeWidth="3" strokeLinejoin="round" />
      <ellipse cx="1269" cy="682" rx="41" ry="20" fill="url(#holeg)" stroke="#2f3a42" strokeWidth="2.5" />
      <path d="M1584 778L1607 755L1679 778Z" fill="#9dbfd8" stroke="#2f3a42" strokeWidth="3" strokeLinejoin="round" />
    </svg>
  );
}

function Sketch() {
  const xs: [number, number][] = [
    [713, 1548], [836, 1548], [960, 1548], [1093, 1548], [1226, 1548], [1473, 1548],
    [713, 1637], [794, 1637], [879, 1637], [960, 1637], [1226, 1637], [1307, 1637], [1392, 1637], [1473, 1637],
    [741, 1738], [794, 1738], [879, 1738], [932, 1738], [1254, 1738], [1307, 1738], [1392, 1738], [1445, 1738],
    [741, 1809], [794, 1809], [879, 1809], [932, 1809], [1254, 1809], [1307, 1809], [1392, 1809], [1445, 1809],
  ];
  return (
    <svg className="absolute inset-0" width="2736" height="766" viewBox="0 1058 2736 766">
      <path d="M713 1824V1637H794V1738H741V1809H794V1824Z" fill="#dde0e4" />
      <path d="M879 1824V1809H932V1738H879V1637H960V1548H1226V1637H1307V1738H1254V1809H1307V1824Z" fill="#dde0e4" />
      <path d="M1392 1824V1809H1445V1738H1392V1637H1473V1824Z" fill="#dde0e4" />
      <path d="M713 1548H1473" stroke="#a5a9ad" strokeWidth="4" strokeDasharray="60 13 6 13" strokeDashoffset="-21" />
      <path d="M960 1548H1226" stroke="#9a9fa4" strokeWidth="4" />
      <path d="M713 1560V1625M1473 1560V1625" stroke="#8d9398" strokeWidth="2" />
      <path d="M836 1548V1824" stroke="#a0a5aa" strokeWidth="2" strokeDasharray="60 13 6 13" strokeDashoffset="-8" />
      <path d="M713 1824V1637H794V1738H741V1809H794V1824M879 1824V1809H932V1738H879V1637H960V1548M1226 1548V1637H1307V1738H1254V1809H1307V1824M1392 1824V1809H1445V1738H1392V1637H1473V1824" fill="none" stroke="#6f7a83" strokeWidth="2.4" />
      {xs.map(([x, y]) => (
        <ellipse key={`${x}-${y}`} cx={x} cy={y} rx="4" ry="5" fill="#5f6b75" />
      ))}
      <path d="M1094 1058V1824" stroke="#6f9bd0" strokeWidth="3" />
    </svg>
  );
}

function CubeTable() {
  return (
    <div className="absolute left-[2670px] top-[631px] w-[70px] h-[68px] bg-white border-[3px] border-[#cccccc] flex items-center">
      <svg className="ml-[11px]" width="42" height="42" viewBox="0 0 42 42" fill="none">
        <path d="M9 14L24 7L39 14V32L24 41L9 32Z" stroke="#333" strokeWidth="2.2" fill="#fff" strokeLinejoin="round" />
        <path d="M9 16L24 23L39 14M24 23V41" stroke="#333" strokeWidth="2.2" />
        <rect x="1" y="1" width="21" height="17" fill="#1a5ca8" />
        <path d="M3 3H7.5V7H3ZM9.5 3H14V7H9.5ZM16 3H20V7H16Z" fill="#8ec8ee" />
        <path d="M3 9H7.5V11.5H3ZM9.5 9H14V11.5H9.5ZM16 9H20V11.5H16ZM3 13.5H7.5V16H3ZM9.5 13.5H14V16H9.5ZM16 13.5H20V16H16Z" fill="#fff" />
      </svg>
    </div>
  );
}

function Window({ h, name, path, canvas, children, count, dim, extrude, bar, avatarId }: {
  h: string; name: string; path: string; canvas: string; children: React.ReactNode; count: number; dim?: boolean; extrude?: boolean; bar?: boolean; avatarId: string;
}) {
  return (
    <div className={`${h} flex flex-col overflow-hidden`}>
      <TabStrip first={`${name} | Part Studio`} />
      <AddressBar path={path} />
      <Header title={name} avatarId={avatarId} />
      <Toolbar />
      <div className={`flex-1 relative flex overflow-hidden ${canvas}`}>
        {children}
        <Panel count={count} dim={dim} extrude={extrude} bar={bar} />
      </div>
    </div>
  );
}

export default function App() {
  return (
    <div className="w-[2736px] h-[1824px] bg-white overflow-hidden">
      <Window h="h-[775px]" name="Box_Piece_1" path="/documents/c65d01081f4deef8f78d1025/w/96b43692899018e0d07f33fc/e/cd0950564da7551dab6a558f" canvas="bg-[#e8edf4]" count={6} dim extrude avatarId="avatar-one">
        <div className="absolute left-[2392px] top-0 bottom-0 right-0 bg-[#ecf1f6]" />
        <Model />
        <NavIso />
      </Window>
      <Window h="h-[1049px]" name="Box_Piece_2" path="/documents/c578d535e8313e10124f7f0a/w/193848ef822f85a482cb2277/e/986eeba2ff29854f94eaf9b9" canvas="bg-[#f4f8fb]" count={5} bar avatarId="avatar-two">
        <Sketch />
        <NavTop />
        <CubeTable />
      </Window>
    </div>
  );
}
